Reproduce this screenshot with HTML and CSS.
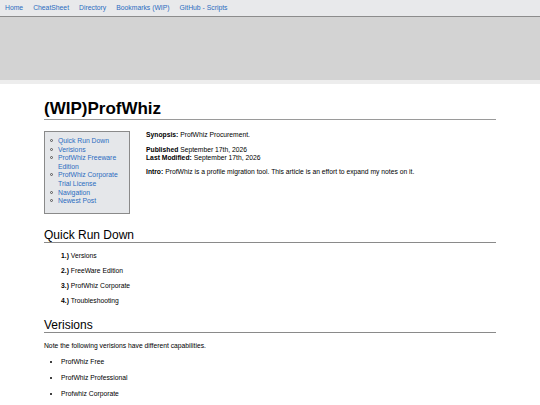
FILE: index.html
```html
<!DOCTYPE html>
<html lang="en">
<head>
<meta charset="utf-8">
<title>(WIP)ProfWhiz</title>
<link rel="stylesheet" href="styles.css">
</head>
<body>
<nav class="topnav">
  <a href="#">Home</a>
  <a href="#">CheatSheet</a>
  <a href="#">Directory</a>
  <a href="#">Bookmarks (WIP)</a>
  <a href="#">GitHub - Scripts</a>
</nav>
<div class="banner"></div>
<div class="strip"></div>
<main class="page">
  <h1 class="title">(WIP)ProfWhiz</h1>
  <div class="intro-row">
    <div class="toc">
      <ul>
        <li><a href="#">Quick Run Down</a></li>
        <li><a href="#">Verisions</a></li>
        <li><a href="#">ProfWhiz Freeware Edition</a></li>
        <li><a href="#">ProfWhiz Corporate Trial License</a></li>
        <li><a href="#">Navigation</a></li>
        <li><a href="#">Newest Post</a></li>
      </ul>
    </div>
    <div class="meta">
      <p><b>Synopsis:</b> ProfWhiz Procurement.</p>
      <p><b>Published</b> September 17th, 2026<br><b>Last Modified:</b> September 17th, 2026</p>
      <p><b>Intro:</b> ProfWhiz is a profile migration tool. This article is an effort to expand my notes on it.</p>
    </div>
  </div>
  <h2 class="section first">Quick Run Down</h2>
  <div class="steps">
    <p><b>1.)</b> Versions</p>
    <p><b>2.)</b> FreeWare Edition</p>
    <p><b>3.)</b> ProfWhiz Corporate</p>
    <p><b>4.)</b> Troubleshooting</p>
  </div>
  <h2 class="section">Verisions</h2>
  <p class="note">Note the following verisions have different capabilities.</p>
  <ul class="bullets">
    <li>ProfWhiz Free</li>
    <li>ProfWhiz Professional</li>
    <li>Profwhiz Corporate</li>
  </ul>
</main>
</body>
</html>
```
FILE: styles.css
```css
html, body {
  margin: 0;
  padding: 0;
  background: #ffffff;
  font-family: "Liberation Sans", Arial, sans-serif;
  color: #000;
}
.topnav {
  display: flex;
  height: 16px;
  align-items: center;
  background: #e8e9eb;
  border-bottom: 1px solid #8c8c8c;
}
.topnav a {
  padding: 0 5px;
  font-size: 6.8px;
  color: #2b6cc0;
  text-decoration: none;
  line-height: 16px;
}
.banner {
  height: 63px;
  background: #d3d3d3;
}
.strip {
  height: 4px;
  background: #ededed;
}
.page {
  width: 452px;
  margin: 0 auto;
}
.title {
  margin: 15px 0 0;
  font-size: 17px;
  line-height: 20px;
  font-weight: bold;
  border-bottom: 1px solid #9a9a9a;
  padding-bottom: 0;
}
.intro-row {
  display: flex;
  gap: 16px;
  margin-top: 11px;
  align-items: flex-start;
}
.toc {
  width: 84px;
  flex: none;
  background: #e5e7ea;
  border: 1px solid #8a8a8a;
  padding: 5px 0 7px;
}
.toc ul {
  margin: 0;
  padding-left: 13px;
  list-style: none;
  font-size: 6.8px;
  line-height: 8.6px;
}
.toc li::before {
  content: "";
  display: inline-block;
  box-sizing: border-box;
  width: 3px;
  height: 3px;
  border: 0.75px solid #555;
  border-radius: 50%;
  margin-left: -8.5px;
  margin-right: 5.5px;
  vertical-align: 1px;
}
.toc a {
  color: #2b6cc0;
  text-decoration: none;
}
.meta {
  font-size: 6.75px;
  line-height: 7.8px;
}
.meta p {
  margin: 0 0 7px;
}
.section {
  margin: 13px 0 0;
  font-size: 12px;
  line-height: 14px;
  font-weight: normal;
  border-bottom: 1px solid #8a8a8a;
}
.section.first {
  margin-top: 14px;
}
.steps {
  padding: 9px 0 0 17px;
  font-size: 6.75px;
  line-height: 8px;
}
.steps p {
  margin: 0 0 7px;
}
.note {
  margin: 9px 0 0;
  font-size: 6.75px;
  line-height: 8px;
}
.bullets {
  margin: 8px 0 0;
  padding-left: 17px;
  font-size: 6.75px;
  line-height: 8px;
}
.bullets li {
  margin-bottom: 8.3px;
}
```
